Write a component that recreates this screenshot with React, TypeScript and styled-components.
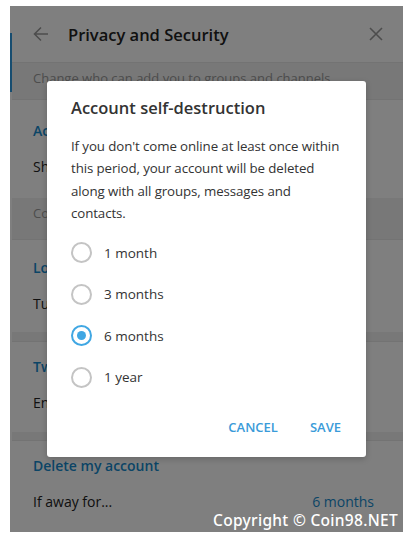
import React, { useState } from "react";
import styled, { createGlobalStyle, css } from "styled-components";

const GlobalStyle = createGlobalStyle`
  html, body {
    margin: 0;
    padding: 0;
    background: #ffffff;
  }
  body {
    font-family: "Open Sans", "Noto Sans", Arial, sans-serif;
  }
`;

const Page = styled.div`
  width: 412px;
  height: 540px;
  box-sizing: border-box;
  padding: 6px 9px 8px 10px;
`;

const Panel = styled.div`
  position: relative;
  display: flex;
  height: 100%;
  background: #ffffff;
  overflow: hidden;
`;

const Edge = styled.div`
  width: 2px;
  flex-shrink: 0;
  background: #ffffff;
`;

const EdgeMarker = styled.div`
  margin-top: 27px;
  height: 59px;
  background: #2f9ae0;
`;

const Content = styled.div`
  flex: 1;
  display: flex;
  flex-direction: column;
`;

const Header = styled.header`
  display: flex;
  align-items: center;
  height: 57px;
  padding: 0 20px 0 21px;
  border-bottom: 1px solid #e7e7e7;
  box-sizing: border-box;
`;

const HeaderTitle = styled.h1`
  flex: 1;
  margin: 0 0 0 19px;
  font-size: 16.5px;
  font-weight: 600;
  color: #222222;
`;

const IconButton = styled.span`
  display: flex;
  align-items: center;
  justify-content: center;
  color: #9a9a9a;
`;

const Band = styled.div<{ $h: number }>`
  height: ${(p) => p.$h}px;
  box-sizing: border-box;
  padding: 5px 0 0 21px;
  background: #f1f1f1;
  border-bottom: 1px solid #e6e6e6;
  font-size: 13px;
  line-height: 20px;
  color: #9a9a9a;
  white-space: nowrap;
`;

const Section = styled.section<{ $top: number; $h: number }>`
  height: ${(p) => p.$h}px;
  box-sizing: border-box;
  padding: ${(p) => p.$top}px 29px 0 21px;
`;

const SectionTitle = styled.div`
  font-size: 14px;
  font-weight: 600;
  line-height: 20px;
  color: #168acd;
`;

const Row = styled.div`
  display: flex;
  justify-content: space-between;
  margin-top: 16px;
  font-size: 14px;
  line-height: 20px;
  color: #222222;
`;

const RowValue = styled.span`
  color: #168acd;
`;

const Overlay = styled.div`
  position: absolute;
  inset: 0;
  display: flex;
  align-items: center;
  justify-content: center;
  background: rgba(0, 0, 0, 0.5);
`;

const Modal = styled.div`
  width: 319px;
  height: 376px;
  box-sizing: border-box;
  padding: 16px 24px 0;
  background: #ffffff;
  border-radius: 3px;
  box-shadow: 0 2px 6px rgba(0, 0, 0, 0.2);
  display: flex;
  flex-direction: column;
`;

const ModalTitle = styled.h2`
  margin: 0;
  font-size: 16.5px;
  font-weight: 600;
  line-height: 22px;
  color: #333333;
`;

const Description = styled.p`
  margin: 16px -6px 0 0;
  font-size: 13.3px;
  letter-spacing: -0.1px;
  line-height: 22.3px;
  color: #333333;
`;

const Options = styled.div`
  margin-top: 8px;
  display: flex;
  flex-direction: column;
`;

const Option = styled.label`
  display: flex;
  align-items: center;
  height: 41.4px;
  cursor: pointer;
  font-size: 13.5px;
  color: #333333;
`;

const Radio = styled.span<{ $checked: boolean }>`
  width: 21px;
  height: 21px;
  box-sizing: border-box;
  margin: 0 12px 0 0;
  border-radius: 50%;
  border: 2px solid #c4c4c4;
  display: flex;
  align-items: center;
  justify-content: center;
  ${(p) =>
    p.$checked &&
    css`
      border-color: #40a7e3;
      &::after {
        content: "";
        width: 9px;
        height: 9px;
        border-radius: 50%;
        background: #40a7e3;
      }
    `}
`;

const Actions = styled.div`
  margin-top: auto;
  margin-bottom: 12px;
  margin-right: -9px;
  display: flex;
  justify-content: flex-end;
  gap: 12px;
`;

const ActionButton = styled.button`
  height: 36px;
  padding: 0 10px;
  border: none;
  background: transparent;
  font-family: inherit;
  font-size: 13px;
  font-weight: 600;
  color: #3a9bd9;
  cursor: pointer;
`;

const Watermark = styled.div`
  position: absolute;
  right: 5px;
  bottom: 1px;
  font-family: "Noto Sans", "Open Sans", sans-serif;
  font-size: 15.5px;
  font-weight: 500;
  letter-spacing: 0.3px;
  color: #ffffff;
`;

const BackIcon = () => (
  <svg width="16" height="16" viewBox="0 0 16 16" fill="none" stroke="currentColor" strokeWidth="1.6">
    <path d="M15 8H1.5M8 1.5L1.5 8L8 14.5" />
  </svg>
);

const CloseIcon = () => (
  <svg width="14" height="14" viewBox="0 0 14 14" fill="none" stroke="currentColor" strokeWidth="1.6">
    <path d="M1 1L13 13M13 1L1 13" />
  </svg>
);

const periods = ["1 month", "3 months", "6 months", "1 year"];

export default function App() {
  const [period, setPeriod] = useState("6 months");

  return (
    <Page>
      <GlobalStyle />
      <Panel>
        <Edge>
          <EdgeMarker />
        </Edge>
        <Content>
          <Header>
            <IconButton>
              <BackIcon />
            </IconButton>
            <HeaderTitle>Privacy and Security</HeaderTitle>
            <IconButton>
              <CloseIcon />
            </IconButton>
          </Header>
          <Band $h={37}>Change who can add you to groups and channels.</Band>
          <Section $top={21} $h={98}>
            <SectionTitle>Active sessions</SectionTitle>
            <Row>Show all sessions</Row>
          </Section>
          <Band $h={42}>Control your sessions on other devices.</Band>
          <Section $top={18} $h={92}>
            <SectionTitle>Local passcode</SectionTitle>
            <Row>Turn on local passcode</Row>
          </Section>
          <Band $h={10} />
          <Section $top={15} $h={90}>
            <SectionTitle>Two-step verification</SectionTitle>
            <Row>Enable two-step verification</Row>
          </Section>
          <Band $h={9} />
          <Section $top={15} $h={91}>
            <SectionTitle>Delete my account</SectionTitle>
            <Row>
              <span>If away for...</span>
              <RowValue>{period}</RowValue>
            </Row>
          </Section>
        </Content>
        <Overlay>
          <Modal>
            <ModalTitle>Account self-destruction</ModalTitle>
            <Description>
              If you don't come online at least once within this period, your account will be deleted
              along with all groups, messages and contacts.
            </Description>
            <Options>
              {periods.map((p) => (
                <Option key={p} onClick={() => setPeriod(p)}>
                  <Radio $checked={p === period} />
                  {p}
                </Option>
              ))}
            </Options>
            <Actions>
              <ActionButton type="button">CANCEL</ActionButton>
              <ActionButton type="button">SAVE</ActionButton>
            </Actions>
          </Modal>
        </Overlay>
        <Watermark>Copyright © Coin98.NET</Watermark>
      </Panel>
    </Page>
  );
}
